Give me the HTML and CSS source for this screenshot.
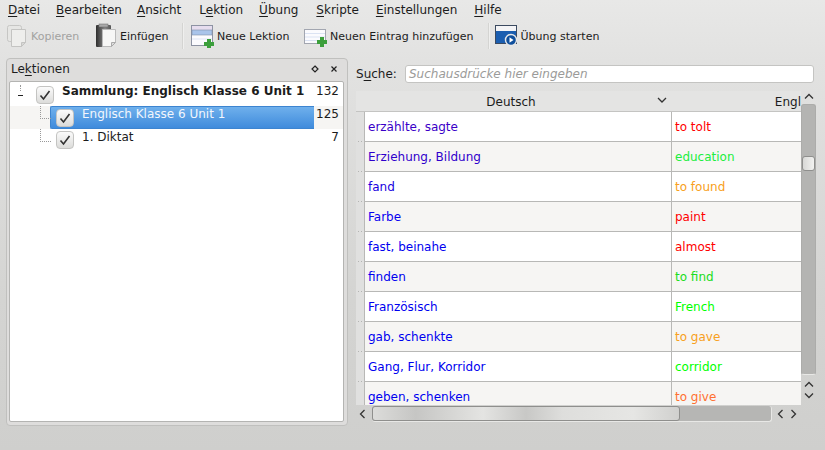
FILE: index.html
```html
<!DOCTYPE html>
<html lang="de">
<head>
<meta charset="utf-8">
<title>Parley</title>
<link rel="stylesheet" href="styles.css">
</head>
<body>
<nav class="menubar">
  <span class="menu"><u>D</u>atei</span>
  <span class="menu"><u>B</u>earbeiten</span>
  <span class="menu"><u>A</u>nsicht</span>
  <span class="menu">L<u>e</u>ktion</span>
  <span class="menu"><u>Ü</u>bung</span>
  <span class="menu"><u>S</u>kripte</span>
  <span class="menu"><u>E</u>instellungen</span>
  <span class="menu"><u>H</u>ilfe</span>
</nav>
<div class="toolbar">
  <span class="tool disabled tool-copy">
    <svg width="22" height="24" viewBox="0 0 22 24"><rect x="1.500" y="1.500" width="14" height="16" rx="2" fill="#e6e6e4" stroke="#c6c6c4"/><path d="M5.500 5.500h14v13l-4 4h-10z" fill="#eeeeec" stroke="#c4c4c2"/><path d="M15.500 22.500v-4h4z" fill="#d8d8d6" stroke="#c4c4c2"/></svg>
    Kopieren
  </span>
  <span class="tool tool-paste">
    <svg width="22" height="26" viewBox="0 0 22 26"><defs><linearGradient id="clip" x1="0" x2="1" y1="0" y2="0"><stop offset="0" stop-color="#2e2e2e"/><stop offset=".6" stop-color="#8a8a8a"/><stop offset="1" stop-color="#555"/></linearGradient></defs><rect x="1" y="2" width="15" height="22" rx="1" fill="url(#clip)"/><rect x="4" y="1" width="9" height="3" fill="#aaa" stroke="#666" stroke-width=".5"/><path d="M7.500 6.500h13v13l-4 4h-9z" fill="#f7f7f6" stroke="#bbb"/><path d="M16.500 23.500v-4h4z" fill="#ddd" stroke="#aaa"/></svg>
    Einfügen
  </span>
  <span class="sep sep-a"></span>
  <span class="tool tool-lesson">
    <svg width="24" height="24" viewBox="0 0 24 24"><rect x="1.500" y="1.500" width="21" height="20" fill="#fbfbfe" stroke="#8d93a3"/><rect x="2" y="2" width="20" height="4" fill="#e6ddee"/><rect x="2" y="6" width="20" height="5" fill="#a9c4ea" stroke="#7f8fa8" stroke-width=".6"/><path d="M2 15h20" stroke="#dfe5f3"/><path d="M17 15h4v3h3v4h-3v2h-4v-2h-3v-4h3z" fill="#3c9f3c"/></svg>
    Neue Lektion
  </span>
  <span class="tool tool-entry">
    <svg width="24" height="24" viewBox="0 0 24 24"><rect x="1.500" y="5.500" width="21" height="14" fill="#fbfbfe" stroke="#a2a6b0"/><path d="M2 9.500h20M2 13h20M2 16.500h20" stroke="#dbe3f3"/><path d="M17 13h4v3h3v4h-3v3h-4v-3h-3v-4h3z" fill="#3c9f3c"/></svg>
    Neuen Eintrag hinzufügen
  </span>
  <span class="sep sep-b"></span>
  <span class="tool tool-start">
    <svg width="23" height="24" viewBox="0 0 23 24"><rect x=".5" y="1.500" width="21" height="18" fill="#1b5eb0" stroke="#3b4a60"/><rect x="1" y="2" width="20" height="5" fill="#f4f4f6"/><circle cx="16" cy="16" r="5.500" fill="#0f4f9c" stroke="#e8e8e8" stroke-width="1.400"/><path d="M14.500 13.200l4 2.800-4 2.800z" fill="#fff"/></svg>
    Übung starten
  </span>
</div>
<main class="content">
  <section class="dock">
    <header class="dock-title">
      <span>Le<u>k</u>tionen</span>
      <span class="dock-buttons">
        <svg width="8" height="8" viewBox="0 0 8 8"><path d="M4 1l3 3-3 3-3-3z" fill="none" stroke="#222" stroke-width="1.200"/></svg>
        <svg width="8" height="8" viewBox="0 0 8 8"><path d="M1.500 1.500l5 5M6.500 1.500l-5 5" stroke="#222" stroke-width="1.200"/></svg>
      </span>
    </header>
    <div class="tree">
      <div class="tree-row tree-root">
        <span class="branch branch-root"></span>
        <span class="check"><svg width="12" height="12" viewBox="0 0 12 12"><path d="M1.500 6.500l3 3.500 6-8" fill="none" stroke="#333" stroke-width="1.600"/></svg></span>
        <span class="label">Sammlung: Englisch Klasse 6 Unit 1</span>
        <span class="count">132</span>
      </div>
      <div class="tree-row tree-child alt">
        <span class="branch"></span>
        <span class="selected">
          <span class="check"><svg width="12" height="12" viewBox="0 0 12 12"><path d="M1.500 6.500l3 3.500 6-8" fill="none" stroke="#333" stroke-width="1.600"/></svg></span>
          <span class="label">Englisch Klasse 6 Unit 1</span>
        </span>
        <span class="count">125</span>
      </div>
      <div class="tree-row tree-child">
        <span class="branch"></span>
        <span class="plain">
          <span class="check"><svg width="12" height="12" viewBox="0 0 12 12"><path d="M1.500 6.500l3 3.500 6-8" fill="none" stroke="#333" stroke-width="1.600"/></svg></span>
          <span class="label">1. Diktat</span>
        </span>
        <span class="count">7</span>
      </div>
    </div>
  </section>
  <section class="main-pane">
    <div class="search">
      <label class="search-label">S<u>u</u>che:</label>
      <div class="search-input">Suchausdrücke hier eingeben</div>
    </div>
    <div class="table-area">
      <div class="table-body">
        <div class="thead">
          <span class="corner"></span>
          <span class="th th-de">Deutsch
            <svg class="sort" width="10" height="6" viewBox="0 0 10 6"><path d="M1 1l4 4 4-4" fill="none" stroke="#333" stroke-width="1.300"/></svg>
          </span>
          <span class="th th-en">Engl</span>
        </div>
        <div class="rows">
          <div class="row"><span class="rh"></span><span class="cell de c1">erzählte, sagte</span><span class="cell en red">to tolt</span></div>
          <div class="row alt"><span class="rh"></span><span class="cell de c2">Erziehung, Bildung</span><span class="cell en lime">education</span></div>
          <div class="row"><span class="rh"></span><span class="cell de c3">fand</span><span class="cell en orange">to found</span></div>
          <div class="row alt"><span class="rh"></span><span class="cell de c4">Farbe</span><span class="cell en red">paint</span></div>
          <div class="row"><span class="rh"></span><span class="cell de c5">fast, beinahe</span><span class="cell en red">almost</span></div>
          <div class="row alt"><span class="rh"></span><span class="cell de c5">finden</span><span class="cell en green">to find</span></div>
          <div class="row"><span class="rh"></span><span class="cell de c5">Französisch</span><span class="cell en bright">French</span></div>
          <div class="row alt"><span class="rh"></span><span class="cell de c5">gab, schenkte</span><span class="cell en orange">to gave</span></div>
          <div class="row"><span class="rh"></span><span class="cell de c5">Gang, Flur, Korridor</span><span class="cell en bright">corridor</span></div>
          <div class="row alt"><span class="rh"></span><span class="cell de c5">geben, schenken</span><span class="cell en coral">to give</span></div>
        </div>
      </div>
      <div class="vscroll">
        <svg class="arrow" width="10" height="7" viewBox="0 0 10 7"><path d="M1 5.500l4-4 4 4" fill="none" stroke="#333" stroke-width="1.300"/></svg>
        <div class="vtrack"><div class="vthumb"></div></div>
        <svg class="arrow arrow-up2" width="10" height="7" viewBox="0 0 10 7"><path d="M1 5.500l4-4 4 4" fill="none" stroke="#333" stroke-width="1.300"/></svg>
        <svg class="arrow" width="10" height="7" viewBox="0 0 10 7"><path d="M1 1.500l4 4 4-4" fill="none" stroke="#333" stroke-width="1.300"/></svg>
      </div>
      <div class="hscroll">
        <svg class="arrow" width="7" height="10" viewBox="0 0 7 10"><path d="M5.500 1l-4 4 4 4" fill="none" stroke="#333" stroke-width="1.300"/></svg>
        <div class="htrack"><div class="hthumb"></div></div>
        <svg class="arrow" width="7" height="10" viewBox="0 0 7 10"><path d="M5.500 1l-4 4 4 4" fill="none" stroke="#333" stroke-width="1.300"/></svg>
        <svg class="arrow" width="7" height="10" viewBox="0 0 7 10"><path d="M1.500 1l4 4-4 4" fill="none" stroke="#333" stroke-width="1.300"/></svg>
      </div>
    </div>
  </section>
</main>
</body>
</html>
```
FILE: styles.css
```css
* { box-sizing: border-box; }
html, body { margin: 0; height: 100%; }
body {
  width: 825px;
  height: 450px;
  overflow: hidden;
  font-family: "DejaVu Sans", sans-serif;
  font-size: 12px;
  color: #1c1c1c;
  background: linear-gradient(#e8e8e7 0, #e2e2e1 60px, #d4d4d2 300px, #cfcfcd 450px);
}
u { text-underline-offset: 2px; text-decoration-thickness: 1px; }

.menubar {
  display: flex;
  height: 20px;
  padding: 2px 0 0 8px;
  gap: 17px;
  line-height: 16px;
}
.menu:nth-child(2) { margin-left: -1px; }
.menu:nth-child(3) { margin-left: -2px; }
.menu:nth-child(4) { margin-left: 1px; }
.menu:nth-child(5) { margin-left: -1px; }
.menu:nth-child(6) { margin-left: 1px; }

.toolbar {
  display: flex;
  align-items: center;
  height: 32px;
  padding-left: 6px;
  font-size: 11px;
}
.tool { display: flex; align-items: center; gap: 3px; white-space: nowrap; }
.disabled { color: #a2a2a0; }
.tool-copy { width: 89px; }
.tool-paste { width: 87px; }
.sep { width: 2px; height: 26px; background: #d4d4d2; border-right: 1px solid #efefee; }
.sep-a { margin-right: 6px; }
.sep-b { margin-left: 14px; margin-right: 5px; }
.tool-lesson { width: 113px; }

.content {
  display: flex;
  padding: 6px 9px 0 6px;
  height: 373px;
}

.dock {
  width: 343px;
  height: 368px;
  padding: 0 3px 3px 2px;
  border: 1px solid #c0c0be;
  border-radius: 4px;
  background: #dedddc;
  display: flex;
  flex-direction: column;
}
.dock-title {
  display: flex;
  justify-content: space-between;
  align-items: center;
  height: 22px;
  padding: 0 5px 2px 2px;
}
.dock-buttons { display: flex; gap: 11px; margin-right: 1px; }
.tree {
  flex: 1;
  background: #fff;
  border: 1px solid #b4b4b2;
  border-radius: 2px;
  padding-top: 1px;
}
.tree-row { display: flex; align-items: flex-start; height: 23px; position: relative; }
.alt { background: #f6f5f3; }
.tree-root .check { margin-left: 26px; margin-top: 3px; }
.tree-root .label { font-weight: bold; margin-left: 8px; line-height: 14px; margin-top: 1px; }
.count { position: absolute; right: 4px; top: 1px; line-height: 14px; }
.tree-child { padding-left: 40px; }
.branch { width: 0; }
.branch::before {
  content: "";
  position: absolute;
  left: 30px;
  top: 0;
  height: 12px;
  width: 10px;
  border-left: 1px dotted #999;
  border-bottom: 1px dotted #999;
}
.branch-root::before {
  left: 10px;
  top: 2px;
  height: 6px;
  width: 0;
  border-bottom: 0;
}
.branch-root::after {
  content: "";
  position: absolute;
  left: 8px;
  top: 12px;
  width: 5px;
  height: 1px;
  background: #222;
}
.selected, .plain {
  display: flex;
  width: 264px;
  height: 23px;
  padding-left: 6px;
  border-radius: 2px 0 0 2px;
}
.selected {
  color: #f2f6fc;
  background: linear-gradient(#6fb0ec, #3f8bdc);
  border: 1px solid #3c84d0;
  border-right: 0;
  padding-left: 5px;
}
.check {
  display: flex;
  align-items: center;
  justify-content: center;
  flex: none;
  width: 18px;
  height: 18px;
  margin-top: 2px;
  border: 1px solid #c4c4c2;
  border-radius: 4px;
  background: linear-gradient(#fbfbfb, #dcdcda);
}
.selected .label, .plain .label { margin-left: 8px; line-height: 14px; margin-top: 0; }
.plain .label { margin-top: 1px; }

.main-pane {
  margin-left: 8px;
  width: 460px;
  display: flex;
  flex-direction: column;
}
.search {
  display: flex;
  align-items: center;
  height: 20px;
  margin-top: 6px;
}
.search-label { width: 49px; }
.search-input {
  flex: 1;
  height: 18px;
  margin-right: 2px;
  padding-left: 3px;
  line-height: 16px;
  background: #fff;
  border: 1px solid #c4c4c2;
  border-radius: 3px;
  color: #9b9b99;
  font-style: italic;
}

.table-area {
  position: relative;
  flex: none;
  height: 338px;
  margin-top: 1px;
  display: grid;
  grid-template-columns: 445px 15px;
  grid-template-rows: 314px 24px;
}
.table-body {
  overflow: hidden;
  width: 445px;
  height: 314px;
  margin-top: 6px;
}
.thead { display: flex; height: 21px; background: #e4e4e3; border-bottom: 1px solid #c4c4c2; }
.corner { width: 8px; }
.th { position: relative; display: flex; justify-content: center; align-items: center; padding-top: 2px; }
.th-de { width: 308px; padding-right: 14px; }
.sort { position: absolute; right: 5px; top: 6px; }
.th-en { flex: 1; white-space: nowrap; justify-content: flex-end; overflow: hidden; }
.row { display: flex; height: 30px; background: #fff; }
.row.alt { background: #f6f5f3; }
.rh {
  position: relative;
  width: 8px;
  background: #e0e0df;
}
.rh::after {
  content: "";
  position: absolute;
  left: 2px;
  bottom: 0;
  width: 4px;
  height: 1px;
  background: repeating-linear-gradient(90deg, #b4b4b2 0 1px, transparent 1px 3px);
}
.cell {
  display: flex;
  align-items: center;
  padding-left: 3px;
  border-bottom: 1px solid #b8b8b6;
  padding-bottom: 1px;
  white-space: nowrap;
}
.de { width: 308px; border-left: 1px solid #b8b8b6; border-right: 1px solid #b8b8b6; padding-top: 1px; }
.en { flex: 1; padding-top: 1px; }
.c1 { color: #3a00c8; }
.c2 { color: #3000cc; }
.c3 { color: #1800e0; }
.c4 { color: #0800f0; }
.c5 { color: #0000f0; }
.red { color: #ff0000; }
.lime { color: #20ee40; }
.green { color: #20dd20; }
.bright { color: #00ff00; }
.orange { color: #f8a020; }
.coral { color: #ff7030; }

.vscroll {
  margin-top: 6px;
  display: flex;
  flex-direction: column;
  align-items: center;
}
.vtrack {
  width: 15px;
  height: 282px;
  margin-top: 4px;
  padding-top: 51px;
  background: #b4b4b2;
  border-radius: 3px;
  border: 1px solid #acacaa;
  border-bottom-color: #e8e8e6;
}
.vthumb {
  width: 13px;
  height: 15px;
  background: linear-gradient(90deg, #d8d8d6, #f2f2f0);
  border: 1px solid #8f8f8d;
  border-radius: 3px;
}
.arrow { display: block; flex: none; }
.vscroll .arrow { margin-top: 4px; }
.vscroll .arrow:first-child { margin-top: 2px; }
.vscroll .arrow-up2 { margin-top: 6px; }
.hscroll {
  grid-column: 1 / 3;
  display: flex;
  align-items: center;
  height: 16px;
  margin-top: 7px;
  padding-left: 3px;
}
.htrack {
  width: 400px;
  height: 16px;
  margin-left: 6px;
  background: #b6b6b4;
  border-radius: 3px;
  border-bottom: 1px solid #e8e8e6;
  border-right: 1px solid #e8e8e6;
  margin-right: 5px;
}
.hthumb {
  width: 308px;
  height: 15px;
  background: linear-gradient(90deg, #dcdcda, #c6c6c4 14%, #e4e4e2 36%, #c8c8c6 50%, #dededc 62%, #e6e6e4 85%, #d0d0ce);
  border: 1px solid #8f8f8d;
  border-radius: 3px;
}
.hscroll .arrow + .htrack + .arrow { margin-right: 6px; }
```
